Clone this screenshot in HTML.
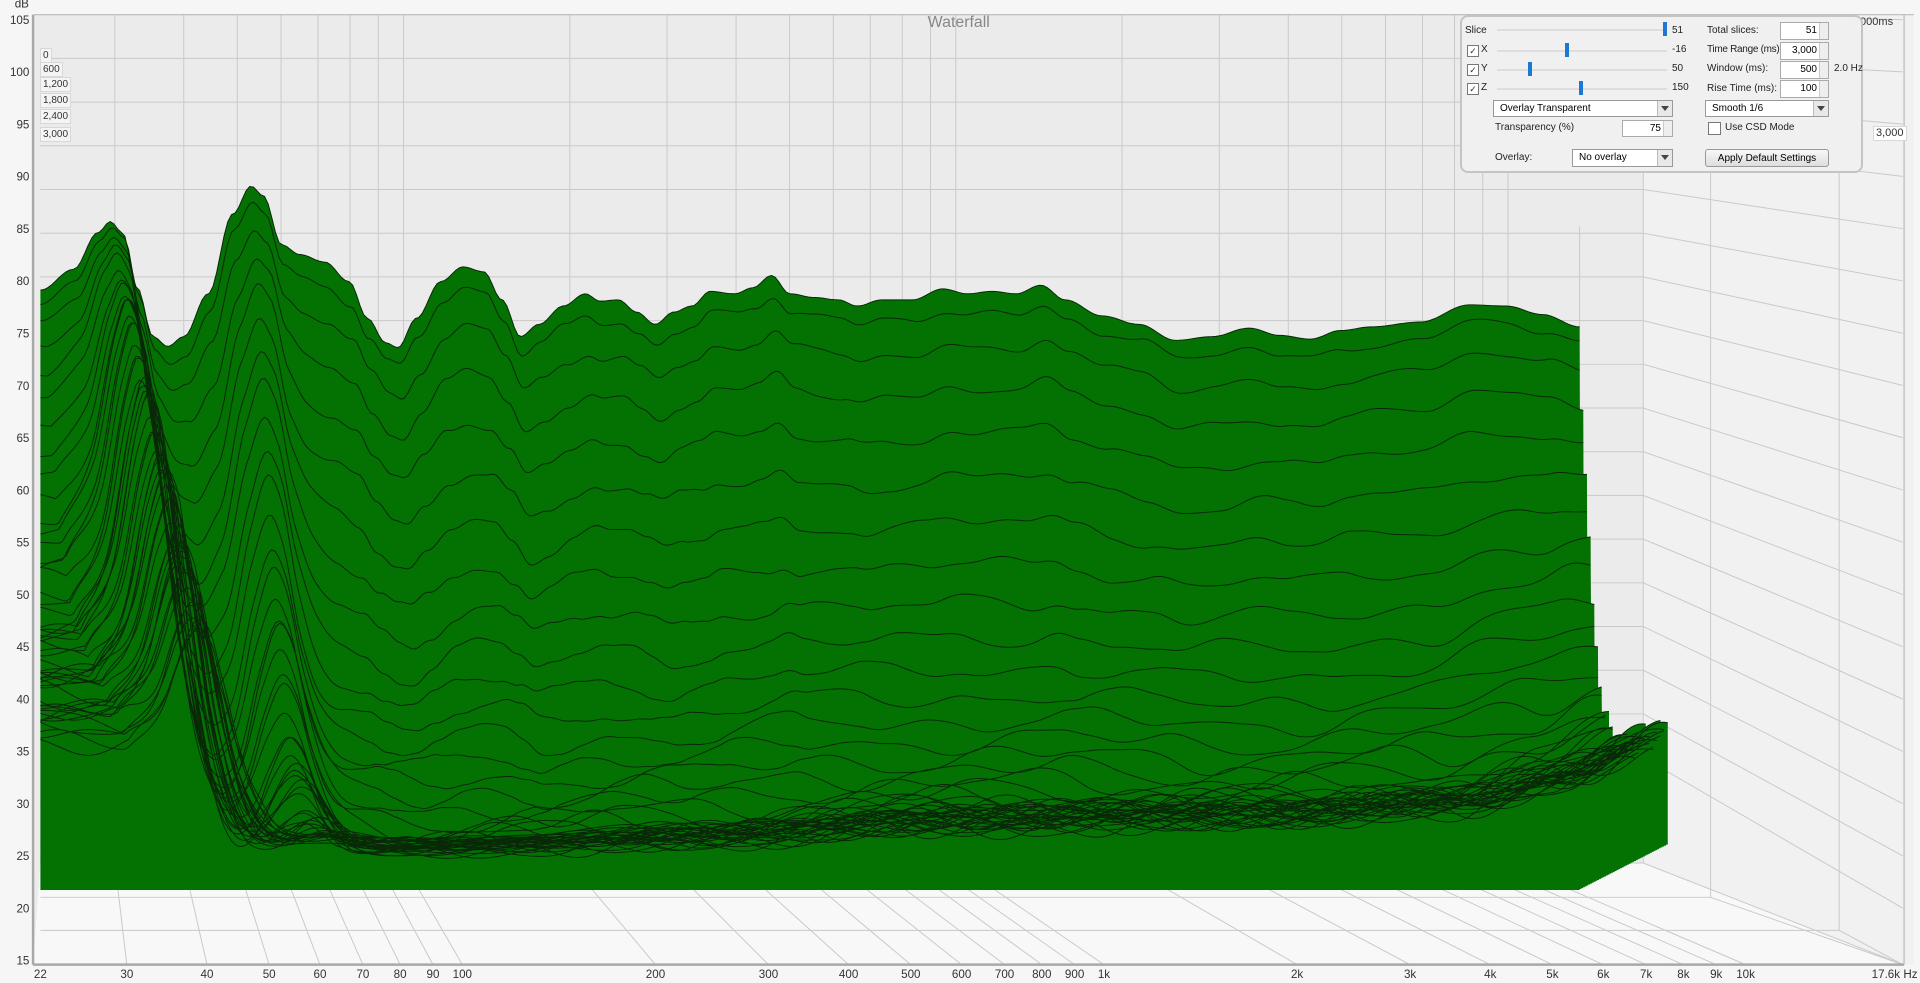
<!DOCTYPE html>
<html><head><meta charset="utf-8"><style>
html,body{margin:0;padding:0;width:1920px;height:983px;overflow:hidden;background:#f6f6f6;font-family:"Liberation Sans",sans-serif}
svg{position:absolute;left:0;top:0}
.p{position:absolute;font-size:10px;color:#222;white-space:nowrap}
.box{position:absolute;background:#fff;border:1px solid #aaa;box-sizing:border-box;font-size:10px;text-align:right;padding-right:11px;line-height:16px}
.spin{position:absolute;right:0;top:0;width:8px;height:100%;border-left:1px solid #ccc;background:#eee}
.dd{position:absolute;background:#fff;border:1px solid #999;box-sizing:border-box;font-size:10px;line-height:15px;padding-left:6px}
.dd b{position:absolute;right:0;top:0;width:14px;height:100%;background:#e8e8e8;border-left:1px solid #bbb}
.dd b:after{content:"";position:absolute;left:3px;top:5px;border:4px solid transparent;border-top:5px solid #444}
.trk{position:absolute;height:2px;background:#ddd}
.th{position:absolute;width:4px;height:14px;background:#1c78d0}
.cb{position:absolute;width:10px;height:10px;border:1px solid #777;background:#fff;font-size:9px;line-height:10px;text-align:center;color:#333}
.tl{position:absolute;left:40px;height:13px;background:#f4f4f4;border:1px solid #d8d8d8;font-size:10px;line-height:13px;padding:0 2px;color:#333}
</style></head><body>
<svg width="1920" height="983" viewBox="0 0 1568 803" preserveAspectRatio="none" id="s">
<rect x="27" y="12" width="1536" height="776" fill="#ebebeb"/>
<polygon points="1342,12 1563,12 1563,788 1554,788 1342,705" fill="#f1f1f1"/>
<polygon points="33,705 1342,705 1554,788 27,788" fill="#f8f8f8"/>
<g id="grid" stroke="#c9c9c9" stroke-width="0.8" fill="none"></g>
<g id="wf"></g>
<line x1="27" y1="12" x2="27" y2="788" stroke="#a8a8a8" stroke-width="2"/>
<line x1="27" y1="788" x2="1555" y2="788" stroke="#a8a8a8" stroke-width="2"/>
<line x1="27" y1="12" x2="1563" y2="12" stroke="#bbb" stroke-width="1"/>
<line x1="1555" y1="12" x2="1555" y2="788" stroke="#bbb" stroke-width="1"/>
<text x="783" y="22" font-size="13" fill="#888" text-anchor="middle" font-family="Liberation Sans">Waterfall</text>
<g id="lab" font-size="9.5" fill="#333" font-family="Liberation Sans"></g>
</svg>

<div class="tl" style="top:48px">0</div>
<div class="tl" style="top:62px">600</div>
<div class="tl" style="top:77px">1,200</div>
<div class="tl" style="top:93px">1,800</div>
<div class="tl" style="top:109px">2,400</div>
<div class="tl" style="top:127px">3,000</div>
<div class="p" style="left:1857px;top:16px;font-size:11px;color:#333">,000ms</div>
<div class="tl" style="left:1873px;top:126px;background:#fff;font-size:11px">3,000</div>

<div style="position:absolute;left:1460px;top:15px;width:403px;height:158px;background:#f0f0f0;border:2px solid #c4c4c4;border-radius:8px;box-sizing:border-box"></div>
<div class="p" style="left:1465px;top:25px">Slice</div>
<div class="trk" style="left:1497px;top:29px;width:170px"></div><div class="th" style="left:1663px;top:22px"></div>
<div class="p" style="left:1672px;top:25px">51</div>
<div class="cb" style="left:1467px;top:45px">✓</div><div class="p" style="left:1481px;top:44px">X</div>
<div class="trk" style="left:1497px;top:50px;width:170px"></div><div class="th" style="left:1565px;top:43px"></div>
<div class="p" style="left:1672px;top:44px">-16</div>
<div class="cb" style="left:1467px;top:64px">✓</div><div class="p" style="left:1481px;top:63px">Y</div>
<div class="trk" style="left:1497px;top:69px;width:170px"></div><div class="th" style="left:1528px;top:62px"></div>
<div class="p" style="left:1672px;top:63px">50</div>
<div class="cb" style="left:1467px;top:83px">✓</div><div class="p" style="left:1481px;top:82px">Z</div>
<div class="trk" style="left:1497px;top:88px;width:170px"></div><div class="th" style="left:1579px;top:81px"></div>
<div class="p" style="left:1672px;top:82px">150</div>
<div class="dd" style="left:1493px;top:100px;width:180px;height:17px">Overlay Transparent<b></b></div>
<div class="p" style="left:1495px;top:122px">Transparency (%)</div>
<div class="box" style="left:1622px;top:120px;width:51px;height:17px">75<span class="spin"></span></div>
<div class="p" style="left:1495px;top:152px">Overlay:</div>
<div class="dd" style="left:1572px;top:149px;width:101px;height:18px">No overlay<b></b></div>
<div class="p" style="left:1707px;top:25px">Total slices:</div>
<div class="box" style="left:1780px;top:22px;width:49px;height:18px">51<span class="spin"></span></div>
<div class="p" style="left:1707px;top:44px;letter-spacing:-0.3px">Time Range (ms):</div>
<div class="box" style="left:1780px;top:42px;width:49px;height:18px">3,000<span class="spin"></span></div>
<div class="p" style="left:1707px;top:63px">Window (ms):</div>
<div class="box" style="left:1780px;top:61px;width:49px;height:18px">500<span class="spin"></span></div>
<div class="p" style="left:1834px;top:63px">2.0 Hz</div>
<div class="p" style="left:1707px;top:83px">Rise Time (ms):</div>
<div class="box" style="left:1780px;top:80px;width:49px;height:18px">100<span class="spin"></span></div>
<div class="dd" style="left:1705px;top:100px;width:124px;height:17px">Smooth 1/6<b></b></div>
<div class="cb" style="left:1708px;top:122px;width:11px;height:11px"></div>
<div class="p" style="left:1725px;top:122px">Use CSD Mode</div>
<div style="position:absolute;left:1705px;top:149px;width:124px;height:18px;border:1px solid #999;border-radius:3px;background:linear-gradient(#f8f8f8,#ddd);font-size:10px;line-height:17px;text-align:center;box-sizing:border-box">Apply Default Settings</div>

<script>
(function(){
var NS="http://www.w3.org/2000/svg";
function el(p,t,a,txt){var e=document.createElementNS(NS,t);for(var k in a)e.setAttribute(k,a[k]);if(txt!=null)e.textContent=String(txt);p.appendChild(e);return e;}
var g=document.getElementById('grid'),lab=document.getElementById('lab'),wf=document.getElementById('wf');
function L(f){return Math.log(f/22)/Math.LN10;}
var freqs=[30,40,50,60,70,80,90,100,200,300,400,500,600,700,800,900,1000,2000,3000,4000,5000,6000,7000,8000,9000,10000];
freqs.forEach(function(f){var xb=33+451*L(f);el(g,'line',{x1:xb,y1:12,x2:xb,y2:705});var xf=33+524*L(f);el(g,'line',{x1:xb,y1:705,x2:xf,y2:788});});
for(var i=0;i<=19;i++){var y=12+i*35.7;if(y>705)break;el(g,'line',{x1:33,y1:y,x2:1342,y2:y});}
for(var v=105;v>=20;v-=5){var yb=12+(105-v)/5*35.7,yf=16+(105-v)*8.54;if(yb<=705)el(g,'line',{x1:1342,y1:yb,x2:1554,y2:yf});}
[[705,1342],[733,1397],[760,1502]].forEach(function(a){el(g,'line',{x1:33,y1:a[0],x2:a[1],y2:a[0]});el(g,'line',{x1:a[1],y1:12,x2:a[1],y2:a[0]});el(g,'line',{x1:a[1],y1:a[0],x2:1554,y2:788});});
el(g,'line',{x1:1290,y1:185,x2:1290,y2:705});
for(var v2=105;v2>=15;v2-=5){el(lab,'text',{x:24,y:16+(105-v2)*8.54+3.5,'text-anchor':'end'},v2);}
el(lab,'text',{x:12,y:6},'dB');
var fl=[[22,'22'],[30,'30'],[40,'40'],[50,'50'],[60,'60'],[70,'70'],[80,'80'],[90,'90'],[100,'100'],[200,'200'],[300,'300'],[400,'400'],[500,'500'],[600,'600'],[700,'700'],[800,'800'],[900,'900'],[1000,'1k'],[2000,'2k'],[3000,'3k'],[4000,'4k'],[5000,'5k'],[6000,'6k'],[7000,'7k'],[8000,'8k'],[9000,'9k'],[10000,'10k']];
fl.forEach(function(a){el(lab,'text',{x:33+524*L(a[0]),y:799,'text-anchor':'middle'},a[1]);});
el(lab,'text',{x:1566,y:799,'text-anchor':'end'},'17.6k Hz');
var P=[[33,237],[60,220],[80,190],[90,181],[100,190],[112,235],[125,275],[137,283],[150,275],[170,240],[190,175],[205,152],[215,160],[230,200],[245,208],[265,214],[285,230],[300,260],[315,280],[325,284],[340,260],[360,230],[378,218],[395,222],[410,245],[425,275],[440,265],[460,250],[478,240],[490,246],[505,245],[520,255],[535,265],[550,255],[565,250],[580,238],[600,240],[615,235],[630,225],[645,240],[665,243],[685,245],[700,250],[720,245],[745,245],[770,236],[790,240],[810,238],[830,240],[850,233],[870,245],[900,258],[930,265],[960,278],[990,275],[1020,268],[1045,274],[1070,277],[1095,270],[1120,267],[1160,263],[1200,249],[1230,250],[1260,257],[1290,267]];
var NP=[[33,712],[150,716],[300,714],[540,705],[700,692],[1000,686],[1150,676],[1230,655],[1290,628]];
function interp(A,x){if(x<=A[0][0])return A[0][1];for(var i=1;i<A.length;i++){if(x<=A[i][0]){var a=A[i-1],b=A[i],u=(x-a[0])/(b[0]-a[0]);u=(1-Math.cos(u*Math.PI))/2;return a[1]+(b[1]-a[1])*u;}}return A[A.length-1][1];}
function G(x,c,w){return Math.exp(-Math.pow((x-c)/w,2));}
var N=50,fills=[],lines=[];
for(var k=0;k<=N;k++){var t=k/N,dx=72*t,fy=727-37*t,xe=1290+dx,pts=[],segs=[],cur=[];
 var aMain=Math.exp(-Math.pow(k/9,1.5));
 var aSlow=Math.max(0.05,1-0.67*t);
 var aMid=Math.exp(-Math.pow(k/15,1.4));
 for(var x=33;x<=xe+0.1;x+=3){var xs=Math.max(33,x-dx),b=interp(P,xs);
  var nz=Math.min(fy,interp(NP,xs)-30*t);
  var m=Math.min(1,G(xs,92,38)+0.45*G(xs,33,28));
  var m2=G(xs,205,30);
  var a=aMain*(1-m)*(1-m2)+aSlow*m+aMid*m2*(1-m);
  var y=nz-(nz-b)*a;
  if(k>0){var amp=2+11*Math.min(1,k/15);
   var w=amp*Math.sin(x/27+k*1.3)*Math.sin(x/71+k*0.7)+1.5*Math.sin(x/11+k*0.9);
   w*=Math.min(1,Math.max(0,(fy-y)/25));y+=w;}
  if(y>fy)y=fy;
  var s=x.toFixed(1)+','+y.toFixed(1);pts.push(s);
  if(y<fy-0.6){cur.push(s);}else{if(cur.length>1)segs.push('M'+cur.join(' L'));cur=[];}}
 if(cur.length>1)segs.push('M'+cur.join(' L'));
 fills.push('M33,'+fy+' L'+pts.join(' L')+' L'+xe.toFixed(1)+','+fy+' Z');
 lines.push(segs.join(' '));}
el(wf,'path',{d:fills.join(' '),fill:'#037203',stroke:'none'});
el(wf,'path',{d:lines.join(' '),fill:'none',stroke:'#082808','stroke-width':0.8,'stroke-linejoin':'round'});
})();
</script>
</body></html>
